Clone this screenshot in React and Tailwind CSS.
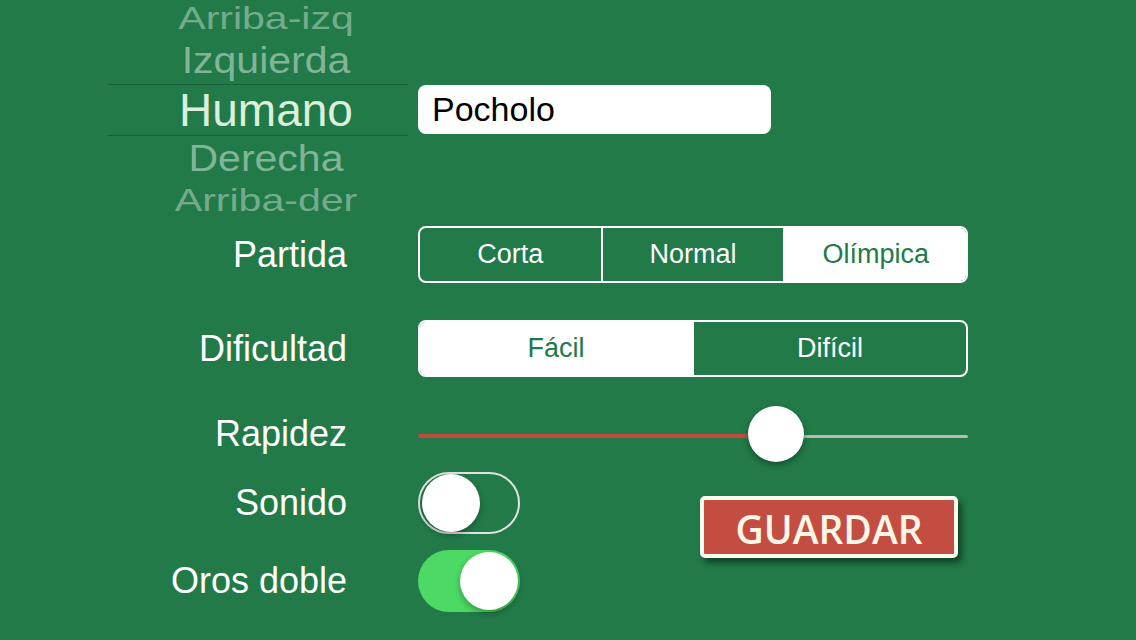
// Game settings screen: seat picker, player name, match options and save button.

import { useState } from 'react';

const SEATS = ['Arriba-izq', 'Izquierda', 'Humano', 'Derecha', 'Arriba-der'];

//segmented control
function Segmented({ options, value, onChange }) {
  return (
    <div className="flex h-[57px] w-[550px] overflow-hidden rounded-[8px] border-2 border-white">
      {options.map((opt, i) => (
        <button
          key={opt}
          type="button"
          onClick={() => onChange(opt)}
          className={
            'flex-1 text-[27px] ' +
            (i > 0 ? 'border-l-2 border-white ' : '') +
            (value === opt ? 'bg-white text-[#217a48]' : 'text-white')
          }
        >
          {opt}
        </button>
      ))}
    </div>
  );
}

//ios style switch
function Toggle({ on, onChange }) {
  return (
    <button
      type="button"
      onClick={() => onChange(!on)}
      className={
        'flex h-[62px] w-[102px] items-center rounded-full p-[2px] ' +
        (on ? 'justify-end bg-[#4cd964]' : 'justify-start border-2 border-[#e2e2e2]')
      }
    >
      <span className="h-[58px] w-[58px] rounded-full bg-white shadow-[0_3px_6px_rgba(0,0,0,0.3)]" />
    </button>
  );
}

//label + control row
function Row({ label, className, children }) {
  return (
    <div className={'flex items-center ' + className}>
      <div className="w-[239px] text-right text-[36px] text-white">{label}</div>
      <div className="ml-[71px]">{children}</div>
    </div>
  );
}

export default function App() {
  const [name, setName] = useState('Pocholo');
  const [partida, setPartida] = useState('Olímpica');
  const [dificultad, setDificultad] = useState('Fácil');
  const [sonido, setSonido] = useState(false);
  const [oros, setOros] = useState(true);

  return (
    <div
      className="h-[640px] w-[1136px] overflow-hidden bg-[#217a48] pl-[108px]"
      style={{ fontFamily: '"Liberation Sans", Arial, sans-serif' }}
    >
      {/* picker + name */}
      <div className="flex h-[216px] items-center">
        <div className="flex h-[216px] w-[300px] flex-col">
          <div className="flex h-[38px] items-center justify-center pl-[16px] text-[41px] text-white/40 scale-y-75">{SEATS[0]}</div>
          <div className="flex h-[46px] items-center justify-center pl-[16px] text-[41px] text-white/45 scale-y-90">{SEATS[1]}</div>
          <div className="flex h-[52px] items-center justify-center border-y border-[#17613a] pl-[16px] text-[46px] text-[#dcefdc]">{SEATS[2]}</div>
          <div className="flex h-[46px] items-center justify-center pl-[16px] text-[41px] text-white/45 scale-y-90">{SEATS[3]}</div>
          <div className="flex h-[36px] items-center justify-center pl-[16px] text-[41px] leading-none text-white/40 scale-y-75">{SEATS[4]}</div>
        </div>
        <input
          value={name}
          onChange={(e) => setName(e.target.value)}
          className="ml-[10px] mt-[3px] h-[49px] w-[353px] rounded-[8px] bg-white px-[14px] text-[34px] text-black outline-none"
        />
      </div>

      <Row label="Partida" className="mt-[10px] h-[57px]">
        <Segmented options={['Corta', 'Normal', 'Olímpica']} value={partida} onChange={setPartida} />
      </Row>

      <Row label="Dificultad" className="mt-[37px] h-[57px]">
        <Segmented options={['Fácil', 'Difícil']} value={dificultad} onChange={setDificultad} />
      </Row>

      <Row label="Rapidez" className="mt-[29px] h-[56px]">
        <div className="flex w-[550px] items-center pt-[4px]">
          <div className="h-[4px] w-[330px] rounded-l-full bg-[#c54a3e]" />
          <div className="h-[56px] w-[56px] shrink-0 -translate-y-[2px] rounded-full bg-white shadow-[0_3px_6px_rgba(0,0,0,0.35)]" />
          <div className="h-[3px] flex-1 rounded-r-full bg-[#b8b8b8]" />
        </div>
      </Row>

      {/* switches + save */}
      <div className="mt-[10px] flex">
        <div className="flex flex-col gap-[16px]">
          <Row label="Sonido" className="h-[62px]">
            <Toggle on={sonido} onChange={setSonido} />
          </Row>
          <Row label="Oros doble" className="h-[62px]">
            <Toggle on={oros} onChange={setOros} />
          </Row>
        </div>
        <button
          type="button"
          className="ml-[180px] mt-[24px] h-[62px] w-[258px] rounded-[5px] border-[4px] border-[#fdfaf0] bg-[#c44d42] text-[39px] font-semibold text-[#fdf6e6] shadow-[4px_5px_6px_rgba(0,0,0,0.45)]"
          style={{ fontFamily: '"Open Sans", sans-serif' }}
        >
          GUARDAR
        </button>
      </div>
    </div>
  );
}
